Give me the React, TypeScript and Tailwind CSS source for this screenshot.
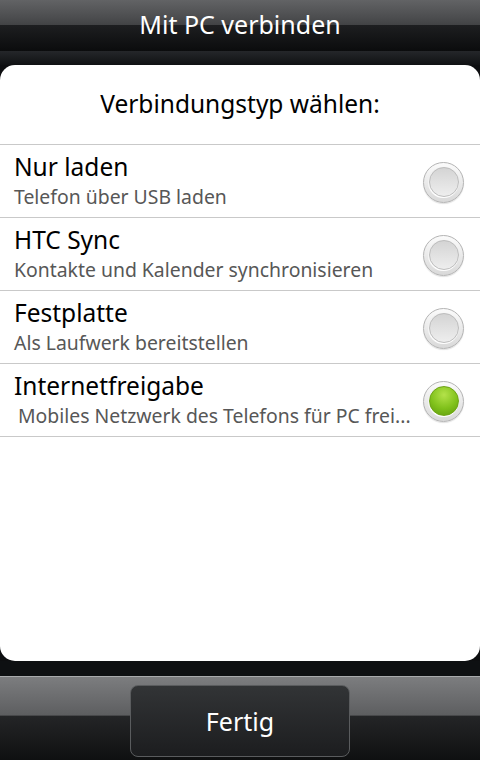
import React from "react";

const font = { fontFamily: '"Noto Sans", "Open Sans", sans-serif' };

function Radio({ checked }: { checked: boolean }) {
  return (
    <div className="w-[41px] h-[41px] rounded-full border border-[#b4b4b4] bg-[linear-gradient(180deg,#fbfbfb,#d9d9d9)] p-[4px] shadow-[0_1px_1px_rgba(0,0,0,0.12)]">
      <div className="w-full h-full rounded-full bg-[linear-gradient(180deg,#e9e9e9,#ffffff)] flex items-center justify-center">
        {checked ? (
          <div className="w-[30px] h-[30px] rounded-full bg-[radial-gradient(circle_at_50%_28%,#b4e24a,#80c11b_55%,#5e9a0d)] border border-[#6fa516]" />
        ) : (
          <div className="w-[30px] h-[30px] rounded-full border border-[#bdbdbd] bg-[linear-gradient(180deg,#d4d4d4,#eeeeee)]" />
        )}
      </div>
    </div>
  );
}

const rows = [
  { t: "Nur laden", s: "Telefon über USB laden", c: false, indent: false },
  { t: "HTC Sync", s: "Kontakte und Kalender synchronisieren", c: false, indent: false },
  { t: "Festplatte", s: "Als Laufwerk bereitstellen", c: false, indent: false },
  { t: "Internetfreigabe", s: "Mobiles Netzwerk des Telefons für PC frei...", c: true, indent: true },
];

export default function App() {
  return (
    <div className="w-[480px] h-[760px] bg-[#0d0e10] flex flex-col overflow-hidden" style={font}>
      {/* Header */}
      <div className="h-[51px] flex items-center justify-center bg-[linear-gradient(180deg,#626365_0%,#434446_48%,#1d1e20_50%,#0b0c0d_100%)]">
        <span className="text-white text-[25px] leading-none -mt-[2px]">Mit PC verbinden</span>
      </div>
      <div className="h-[14px] bg-[linear-gradient(180deg,#25272a,#101113)]" />
      {/* Panel */}
      <div className="h-[596px] bg-white rounded-[15px] flex flex-col">
        <div className="h-[80px] flex items-center justify-center border-b border-[#c9c9c9]">
          <span className="text-black text-[24.5px] leading-none">Verbindungstyp wählen:</span>
        </div>
        {rows.map((r) => (
          <div key={r.t} className="h-[73px] border-b border-[#c9c9c9] flex items-center pl-[14px] pr-[16px]">
            <div className="flex-1 min-w-0 flex flex-col">
              <span className="text-black text-[24.5px] leading-[28px]">{r.t}</span>
              <span className={"text-[#575757] text-[19.4px] leading-[26px] mt-[3px] whitespace-nowrap " + (r.indent ? "pl-[4px]" : "")}>
                {r.s}
              </span>
            </div>
            <div className="ml-[8px] mt-[2px] shrink-0">
              <Radio checked={r.c} />
            </div>
          </div>
        ))}
      </div>
      <div className="h-[15px] bg-[#0e1012]" />
      {/* Bottom bar */}
      <div className="flex-1 border-t border-[#a9abad] bg-[linear-gradient(180deg,#7c7d7f_0%,#5d5e60_46%,#242527_47%,#0f1011_100%)] flex justify-center pt-[8px]">
        <div className="w-[220px] h-[72px] rounded-[8px] border border-[#5a5c5e] bg-[linear-gradient(180deg,#323436,#1c1d1f)] flex items-center justify-center">
          <span className="text-white text-[25px] leading-none">Fertig</span>
        </div>
      </div>
    </div>
  );
}
